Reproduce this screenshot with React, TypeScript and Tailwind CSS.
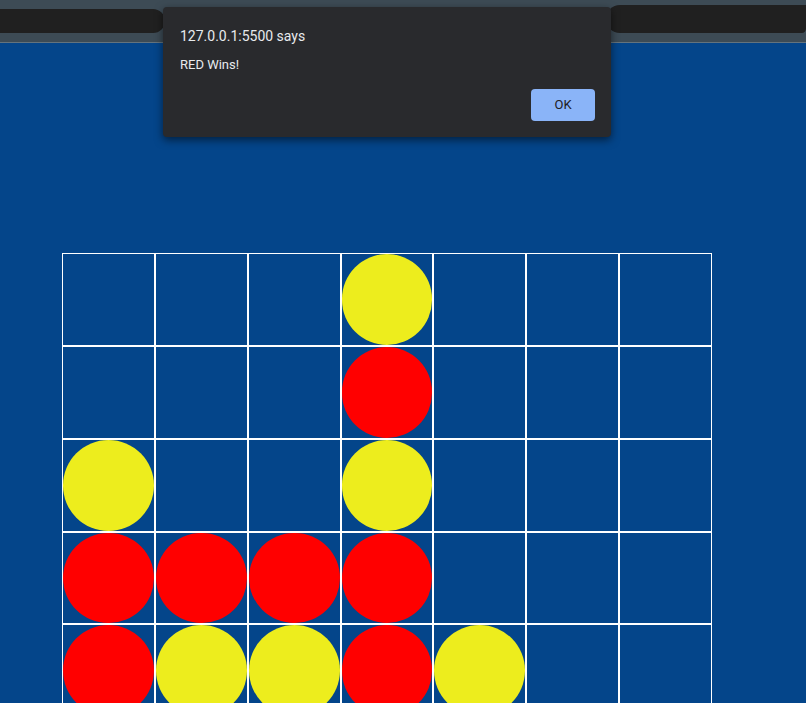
const R = "r";
const Y = "y";
const _ = "";

const board = [
  [_, _, _, Y, _, _, _],
  [_, _, _, R, _, _, _],
  [Y, _, _, Y, _, _, _],
  [R, R, R, R, _, _, _],
  [R, Y, Y, R, Y, _, _],
  [Y, R, Y, Y, R, _, _],
];

const Cell = ({ piece }: { piece: string }) => (
  <div className="aspect-square border border-white box-border">
    {piece === R && <div className="w-full h-full rounded-full bg-[#ff0000]" />}
    {piece === Y && <div className="w-full h-full rounded-full bg-[#eded1d]" />}
  </div>
);

const AlertBox = () => (
  <div
    className="absolute left-[163px] top-[7px] w-[448px] h-[130px] rounded-[4px] bg-[#292a2d] shadow-[0_3px_8px_rgba(0,0,0,0.55)] px-[17px] pt-[20px]"
    style={{ fontFamily: "Roboto, 'Open Sans', sans-serif" }}
  >
    <div className="text-[14px] leading-[18px] text-[#e8eaed]">127.0.0.1:5500 says</div>
    <div className="mt-[11px] text-[13px] leading-[18px] text-[#e8eaed]">RED Wins!</div>
    <div className="flex justify-end mt-[15px]">
      <button className="w-[64px] h-[32px] mr-[-1px] rounded-[4px] bg-[#8ab4f8] text-[13px] text-[#202124]">
        OK
      </button>
    </div>
  </div>
);

export default function App() {
  return (
    <div className="relative w-[806px] h-[703px] overflow-hidden bg-[#04458a]">
      <div className="h-[43px] bg-[#3d4b55] border-b border-[#64737d] flex justify-between">
        <div className="w-[165px] h-[24px] mt-[9px] rounded-r-full bg-[#202020]" />
        <div className="w-[200px] h-[28px] mt-[5px] rounded-l-[40px] rounded-br-[12px] bg-[#202020]" />
      </div>
      <div className="ml-[62px] mt-[210px] w-[650px] grid grid-cols-7">
        {board.flatMap((row, ri) =>
          row.map((p, ci) => <Cell key={`${ri}-${ci}`} piece={p} />)
        )}
      </div>
      <AlertBox />
    </div>
  );
}
